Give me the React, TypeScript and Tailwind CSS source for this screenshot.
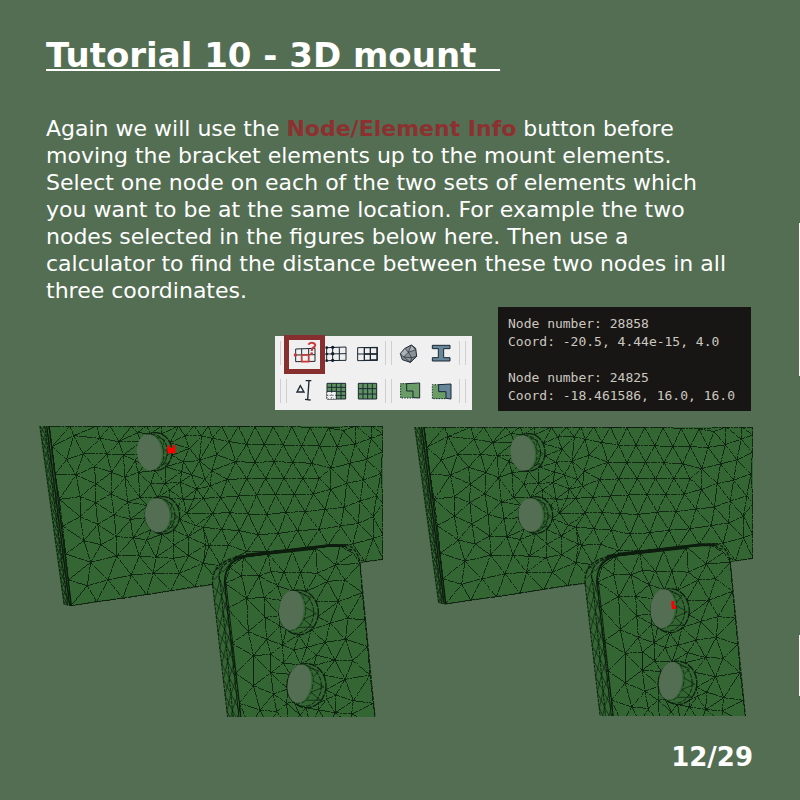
import React from "react";

type Point = [number, number];
type Hole = {
  inner: [number, number, number, number, number];
  outer: [number, number, number, number];
};

const PLATE: Point[] = [
  [58, 18], [66, 80], [76, 163], [88, 238], [98, 318], [107, 402], [115, 480], [123, 557],
  [120, 18], [200, 18], [240, 18], [305, 18], [350, 18], [395, 18], [445, 18], [492, 18],
  [131, 47], [210, 55], [110, 118], [160, 102], [267, 65], [230, 102], [280, 105], [138, 165],
  [193, 140], [245, 157], [198, 192], [285, 172], [316, 122], [325, 157], [150, 230], [197, 248],
  [243, 222], [293, 246], [150, 290], [203, 313], [253, 284], [330, 233], [301, 298], [162, 362],
  [213, 374], [258, 350], [310, 353], [322, 38], [182, 427], [260, 408], [328, 408], [350, 360],
  [172, 497], [234, 480], [304, 465], [370, 460], [448, 460], [200, 545], [278, 535], [350, 524],
  [422, 512], [495, 500], [378, 412], [432, 375], [430, 415], [476, 407], [475, 350], [362, 192],
  [405, 190], [450, 187], [500, 207], [460, 125], [508, 122], [418, 210], [492, 237], [525, 178],
  [470, 280], [497, 317], [460, 238], [527, 375], [520, 430], [478, 85], [465, 48],
  [515, 48], [455, 155], [485, 165],
  [535, 18], [575, 18], [625, 18], [675, 20], [730, 20], [785, 20], [840, 22], [895, 24], [977, 18],
  [1025, 18], [1059, 18], [548, 55], [598, 65], [650, 73], [703, 73], [760, 75], [815, 78],
  [868, 78], [922, 80], [975, 72], [1023, 55], [1059, 42], [940, 32], [560, 104], [617, 125],
  [675, 127], [732, 125], [788, 127], [845, 130], [903, 145], [960, 130], [1010, 118], [1057, 95],
  [545, 152], [592, 178], [650, 176], [707, 175], [762, 175], [818, 175], [867, 175], [850, 222],
  [902, 208], [950, 190], [1000, 180], [1053, 160], [540, 198], [520, 235], [572, 232], [625, 228],
  [680, 225], [737, 225], [793, 223], [548, 280], [600, 278], [655, 282], [710, 284], [768, 277],
  [825, 275], [885, 268], [942, 262], [990, 243], [1040, 228], [520, 322], [575, 328],
  [628, 332], [685, 344], [745, 340], [803, 332], [867, 328], [932, 318], [985, 310], [1030, 290],
  [537, 378], [595, 375], [650, 395], [710, 395], [770, 390], [830, 384], [895, 375], [968, 372],
  [1030, 355], [1059, 250], [1059, 345], [1059, 418], [1005, 425], [572, 437],
  [570, 490], [640, 480],
];

const BRACKET: Point[] = [
  [585, 490], [592, 565], [605, 670], [617, 760], [628, 850], [634, 920],
  [990, 430], [997, 518], [1005, 600], [1013, 680], [1020, 765], [1030, 850], [1038, 920],
  [600, 442], [640, 412], [715, 402], [787, 394], [857, 383], [930, 378], [970, 400],
  [635, 468], [687, 468], [722, 455], [762, 457], [812, 457], [862, 460], [917, 435], [892, 484],
  [743, 498], [650, 535], [702, 533], [945, 480], [925, 545], [655, 635], [705, 592], [750, 618],
  [670, 707], [722, 703], [710, 658], [758, 675], [792, 690], [830, 682], [947, 658], [886, 667],
  [915, 720], [968, 722], [953, 595], [900, 610], [860, 705], [760, 730], [722, 758], [670, 797],
  [730, 822], [770, 850], [690, 870], [740, 875], [945, 778], [918, 825], [970, 842], [890, 838],
  [915, 878], [965, 882], [865, 870], [660, 920], [715, 920], [775, 920], [840, 920], [900, 920],
  [970, 920], [810, 885],
];

const PLATE_HOLES: Hole[] = [
  { inner: [358, 97, 37, 54, -8], outer: [376, 95, 50, 57] },
  { inner: [382, 286, 37, 51, -4], outer: [398, 286, 51, 56] },
];

const BRACKET_HOLES: Hole[] = [
  { inner: [784, 571, 37, 59, 5], outer: [807, 577, 58, 67] },
  { inner: [808, 791, 35, 58, 9], outer: [830, 797, 58, 66] },
];

function rim({ outer: [cx, cy, rx, ry] }: Hole): Point[] {
  return Array.from({ length: 9 }, (_, i): Point => {
    const a = (i / 9) * Math.PI * 2 + 0.2;
    return [cx + rx * Math.cos(a), cy + ry * Math.sin(a)];
  });
}

/* Bowyer-Watson triangulation; returns one SVG path with every edge drawn once. */
function meshPath(nodes: Point[], holes: Hole[]): string {
  const p: Point[] = [...nodes, ...holes.flatMap(rim)];
  const n = p.length;
  p.push([-9000, -7000], [10000, -7000], [500, 12000]);
  let tris: number[][] = [[n, n + 1, n + 2]];
  const inCircle = (t: number[], q: Point) => {
    const [a, b, c] = t.map((i) => p[i]);
    const d = 2 * (a[0] * (b[1] - c[1]) + b[0] * (c[1] - a[1]) + c[0] * (a[1] - b[1]));
    const s = [a, b, c].map((v) => v[0] * v[0] + v[1] * v[1]);
    const ux = (s[0] * (b[1] - c[1]) + s[1] * (c[1] - a[1]) + s[2] * (a[1] - b[1])) / d;
    const uy = (s[0] * (c[0] - b[0]) + s[1] * (a[0] - c[0]) + s[2] * (b[0] - a[0])) / d;
    return Math.hypot(q[0] - ux, q[1] - uy) < Math.hypot(a[0] - ux, a[1] - uy);
  };
  for (let i = 0; i < n; i++) {
    const bad = tris.filter((t) => inCircle(t, p[i]));
    const count = new Map<string, number>();
    const key = (a: number, b: number) => (a < b ? `${a},${b}` : `${b},${a}`);
    bad.forEach((t) =>
      [0, 1, 2].forEach((k) => {
        const e = key(t[k], t[(k + 1) % 3]);
        count.set(e, (count.get(e) ?? 0) + 1);
      }),
    );
    tris = tris.filter((t) => !bad.includes(t));
    count.forEach((c, e) => {
      if (c === 1) tris.push([...e.split(",").map(Number), i]);
    });
  }
  const edges = new Set<string>();
  tris
    .filter((t) => t.every((i) => i < n))
    .forEach((t) => {
      const cx = (p[t[0]][0] + p[t[1]][0] + p[t[2]][0]) / 3;
      const cy = (p[t[0]][1] + p[t[1]][1] + p[t[2]][1]) / 3;
      if (holes.some(({ outer: o }) => ((cx - o[0]) / o[2]) ** 2 + ((cy - o[1]) / o[3]) ** 2 < 0.95)) return;
      [0, 1, 2].forEach((k) => {
        const a = p[t[k]];
        const b = p[t[(k + 1) % 3]];
        if (Math.hypot(a[0] - b[0], a[1] - b[1]) > 125) return;
        const [s, e] = a[0] < b[0] ? [a, b] : [b, a];
        edges.add(`M${s[0].toFixed(0)} ${s[1].toFixed(0)}L${e[0].toFixed(0)} ${e[1].toFixed(0)}`);
      });
    });
  return [...edges].join("");
}

/* Zigzag bracing for the thin side faces. */
function zigzag(a0: Point, a1: Point, b0: Point, b1: Point, steps: number): string {
  const at = (s: Point, e: Point, t: number) =>
    `${(s[0] + (e[0] - s[0]) * t).toFixed(0)} ${(s[1] + (e[1] - s[1]) * t).toFixed(0)}`;
  let d = "";
  for (let i = 0; i < steps; i++) {
    const [t, u] = [i / steps, (i + 1) / steps];
    d += i % 2 ? `M${at(b0, b1, t)}L${at(a0, a1, u)}` : `M${at(a0, a1, t)}L${at(b0, b1, u)}`;
    d += i % 2 ? `M${at(a0, a1, t)}L${at(b0, b1, u)}` : `M${at(b0, b1, t)}L${at(a0, a1, u)}`;
  }
  return d;
}

const plateMesh = meshPath(PLATE, PLATE_HOLES);
const bracketMesh = meshPath(BRACKET, BRACKET_HOLES);
const plateSide =
  zigzag([30, 18], [103, 552], [42, 18], [113, 557], 22) + zigzag([42, 18], [110, 555], [56, 18], [121, 557], 13);
const bracketSide = zigzag([548, 497], [596, 920], [570, 480], [612, 920], 9) +
  zigzag([570, 480], [612, 920], [585, 490], [634, 920], 9);

function HoleShape({ hole }: { hole: Hole }) {
  const [cx, cy, rx, ry, tilt] = hole.inner;
  const [ox, oy, orx, ory] = hole.outer;
  return (
    <g stroke="#0c1d0e">
      <ellipse cx={ox} cy={oy} rx={orx} ry={ory} fill="#336633" strokeWidth="4" strokeDasharray="24 3" />
      <ellipse cx={ox - 8} cy={oy + 1} rx={orx - 6} ry={ory - 5} fill="none" strokeWidth="3" strokeDasharray="13 4" />
      <path
        d={`M${cx + 18} ${cy - ry + 6}L${ox + orx - 22} ${oy - ory + 22}L${cx + rx} ${cy - 12}L${ox + orx - 6} ${oy + 4}L${cx + rx} ${cy + 26}L${ox + orx - 16} ${oy + ory - 22}L${cx + 16} ${cy + ry - 8}`}
        fill="none"
        strokeWidth="2"
      />
      <ellipse cx={cx + 6} cy={cy} rx={rx} ry={ry} fill="#336633" strokeWidth="2" strokeDasharray="12 5" transform={`rotate(${tilt} ${cx} ${cy})`} />
      <ellipse cx={cx} cy={cy} rx={rx} ry={ry} fill="#546e53" stroke="none" transform={`rotate(${tilt} ${cx} ${cy})`} />
    </g>
  );
}

function MeshFigure({ label, height, children }: { label: string; height: number; children: React.ReactNode }) {
  return (
    <svg role="img" aria-label={label} viewBox={`27 18 1032 ${height}`} className="block h-auto w-full">
      <path d="M27 18H1059V418L123 557L100 552Z" fill="#336633" />
      <g fill="none" stroke="#0c1d0e">
        <path d={plateMesh} strokeWidth="3" strokeOpacity="0.85" strokeDasharray="13 2 7 1" shapeRendering="crispEdges" />
        <path d={plateSide} strokeWidth="2.4" strokeOpacity="0.8" />
        <path d="M30 18L102 552M44 18L113 556" strokeWidth="3" strokeDasharray="9 3" />
        <path d="M50 18L119 557M57 18L124 557" strokeWidth="4" />
        <path d="M100 552L123 557L1059 418" strokeWidth="2" strokeDasharray="14 4" />
      </g>
      {PLATE_HOLES.map((h) => (
        <HoleShape key={h.inner[0]} hole={h} />
      ))}
      <path d="M548 497Q542 428 610 414L640 406L910 373Q975 372 990 430L1038 920H596Z" fill="#336633" />
      <g fill="none" stroke="#0c1d0e">
        <path d={bracketMesh} strokeWidth="3" strokeOpacity="0.85" strokeDasharray="13 2 7 1" shapeRendering="crispEdges" />
        <path d={bracketSide} strokeWidth="2.4" strokeOpacity="0.8" />
        <path d="M548 497L596 920M570 480L612 920" strokeWidth="3" strokeDasharray="10 3" />
        <path d="M583 485L630 920M588 490L636 920" strokeWidth="3" />
        <path d="M584 495Q582 425 640 412" strokeWidth="5" />
        <path d="M548 497Q542 428 620 412M568 480Q562 428 628 414" strokeWidth="4" strokeDasharray="12 4" />
        <path d="M550 455L572 440L590 420M556 440L580 455L610 418M552 480L574 456" strokeWidth="2" />
        <path d="M615 412L900 376L945 377" strokeWidth="8" />
        <path d="M650 406L860 383" strokeWidth="11" />
        <path d="M945 377Q952 390 968 390M945 374Q980 378 990 430" strokeWidth="4" strokeDasharray="11 4" />
        <path d="M990 430L1038 920" strokeWidth="3" strokeDasharray="12 4" />
      </g>
      {BRACKET_HOLES.map((h) => (
        <HoleShape key={h.inner[0]} hole={h} />
      ))}
      {children}
    </svg>
  );
}

function Icon({ children }: { children: React.ReactNode }) {
  return (
    <svg viewBox="0 0 84 72" className="h-6 w-7" fill="none" stroke="#1b2733" strokeWidth="3" aria-hidden="true">
      {children}
    </svg>
  );
}

function Tool({ label, wide, children }: { label: string; wide?: boolean; children: React.ReactNode }) {
  return (
    <button type="button" aria-label={label} className={wide ? "flex w-8 justify-center" : "flex w-[31px] justify-center"}>
      <Icon>{children}</Icon>
    </button>
  );
}

function Grip() {
  return <span className="h-6 w-[7px] border-x border-[#cfcfcf]" />;
}

function Toolbar() {
  return (
    <div className="mb-px flex h-[74px] w-[197px] flex-col justify-between bg-[#f0f0f0]">
      <div className="flex h-[34px] items-center pl-[5px]">
        <Grip />
        <div className="relative mr-[3px] ml-[2px] flex">
          <Tool label="Node/Element Info">
            <path d="M14 24L72 22V61L14 62ZM32 23V62M53 23V61M14 42L72 41" />
            <path d="M32 42H53V62H32Z" stroke="#c93a38" strokeWidth="5" />
            <circle cx="13" cy="42" r="5" fill="#c93a38" stroke="none" />
            <path d="M52 11Q58 4 66 6Q76 9 71 17Q62 21 62 30" stroke="#c93a38" strokeWidth="6" />
            <circle cx="62" cy="38" r="4" fill="#c93a38" stroke="none" />
          </Tool>
          <span className="pointer-events-none absolute -top-[6px] -left-[5px] h-[39px] w-[41px] border-[5px] border-[#872e2f]" />
          <Tool label="Node set">
            <path d="M14 20L72 18V58L14 59M14 20V59M32 19V58M52 19V58M14 39L72 38" />
            <g fill="#101c2c" stroke="none">
              <circle cx="14" cy="20" r="4" />
              <circle cx="14" cy="39" r="4" />
              <circle cx="32" cy="19" r="5" />
              <circle cx="32" cy="38" r="5" />
              <circle cx="32" cy="58" r="5" />
              <circle cx="14" cy="59" r="4" />
            </g>
          </Tool>
          <Tool label="Element set">
            <path d="M14 20L73 19V58L14 59ZM14 39H73" />
            <path d="M34 20H72V57H52V39H34ZM52 20V57M34 39H72M34 39V58H52" strokeWidth="4" />
          </Tool>
        </div>
        <Grip />
        <div className="mr-[2px] ml-px flex">
          <Tool label="Material" wide>
            <path d="M16 38L30 22L49 12L62 22L65 46L46 64L22 56Z" fill="#8d9296" />
            <path d="M30 22L40 34L26 48L16 38ZM40 34L62 26L49 12Z" fill="#b0b3b5" strokeWidth="2" />
            <path d="M26 48L46 64L65 46M40 34L50 50L65 46M26 48L50 50L46 64" strokeWidth="2" />
          </Tool>
          <Tool label="Section" wide>
            <path d="M16 13H69V23H50V50H69V60H16V50H34V23H16Z" fill="#66869a" />
          </Tool>
        </div>
        <Grip />
      </div>
      <div className="flex h-[38px] items-center pl-[5px]">
        <Grip />
        <div className="mr-[3px] ml-[2px] flex">
          <Tool label="Measure">
            <path d="M28 20L18 39H39ZM44 5H61M42 61L59 63M54 5L50 62" strokeWidth="4" />
          </Tool>
          <Tool label="Show selected elements">
            <path d="M15 13H71V60H15Z" fill="#5e9360" />
            <path d="M15 38H43V60H15Z" fill="#f0f0f0" stroke="none" />
            <path d="M15 25H71M43 38H71M43 49H71M29 13V38M43 13V60M57 13V60M15 37H43" />
            <path d="M15 38V60H43M15 49H43M29 38V60" strokeWidth="2" strokeDasharray="4 4" />
          </Tool>
          <Tool label="Show all elements">
            <path d="M16 13H71V60H16Z" fill="#5e9360" />
            <path d="M16 29H71M16 45H71M30 13V60M44 13V60M58 13V60" />
          </Tool>
        </div>
        <Grip />
        <div className="mr-[2px] ml-px flex">
          <Tool label="Merge elements" wide>
            <path d="M16 13H74V57H16Z" fill="#6a9c66" stroke="none" />
            <path d="M35 14L74 12V57L54 56V36H35V14" />
            <path d="M35 14H17V57H54" strokeDasharray="4 4" />
          </Tool>
          <Tool label="Assembly" wide>
            <path d="M16 17H57V60H16Z" fill="#6a9c66" stroke="none" />
            <path d="M35 17L72 15V60L57 58V38H35Z" fill="#66869a" />
            <path d="M35 17H16V59H57" strokeDasharray="4 4" />
          </Tool>
        </div>
        <Grip />
      </div>
    </div>
  );
}

export default function App() {
  return (
    <main className="relative flex min-h-screen flex-col bg-[#546e53] pt-[37px] pb-7 font-['DejaVu_Sans',sans-serif] text-white">
      <h1 className="px-[46px] text-[34px] leading-9 font-bold whitespace-pre underline decoration-2 underline-offset-2">
        {"Tutorial 10 - 3D mount\u00a0\u00a0"}
      </h1>
      <p className="mt-[42px] pr-[68px] pl-[46px] text-[22px] leading-[27px]">
        Again we will use the <strong className="font-bold text-[#8d3030]">Node/Element Info</strong> button before moving
        the bracket elements up to the mount elements. Select one node on each of the two sets of elements which you want
        to be at the same location. For example the two nodes selected in the figures below here. Then use a calculator to
        find the distance between these two nodes in all three coordinates.
      </p>
      <div className="mt-[3px] flex items-end justify-end gap-[26px] pr-[49px]">
        <Toolbar />
        <pre className="h-[104px] w-[253px] bg-[#181614] pt-2 pl-[10px] font-['DejaVu_Sans_Mono',monospace] text-[13px] leading-[18px] text-[#ccc8c0]">
          {"Node number: 28858\nCoord: -20.5, 4.44e-15, 4.0\n\nNode number: 24825\nCoord: -18.461586, 16.0, 16.0"}
        </pre>
      </div>
      <div className="mt-[15px] grid grid-cols-[344fr_339fr] items-start gap-[31px] pr-[47px] pl-[39px]">
        <MeshFigure label="Mount mesh with a node selected on the plate" height={872}>
          <path d="M414 76H420V84H428V76H436V100H412V84Z" fill="#ff0000" />
        </MeshFigure>
        <div className="pt-px">
          <MeshFigure label="Mount mesh with a node selected on the bracket" height={880}>
            <path d="M810 548H819V560L824 564V572H812Z" fill="#ff0000" />
          </MeshFigure>
        </div>
      </div>
      <footer className="mt-auto pr-[47px] text-right text-[26px] leading-[30px] font-bold">12/29</footer>
      <span className="absolute top-[223px] right-0 h-[153px] w-px bg-white" />
      <span className="absolute top-[635px] right-0 h-[61px] w-px bg-white" />
    </main>
  );
}
